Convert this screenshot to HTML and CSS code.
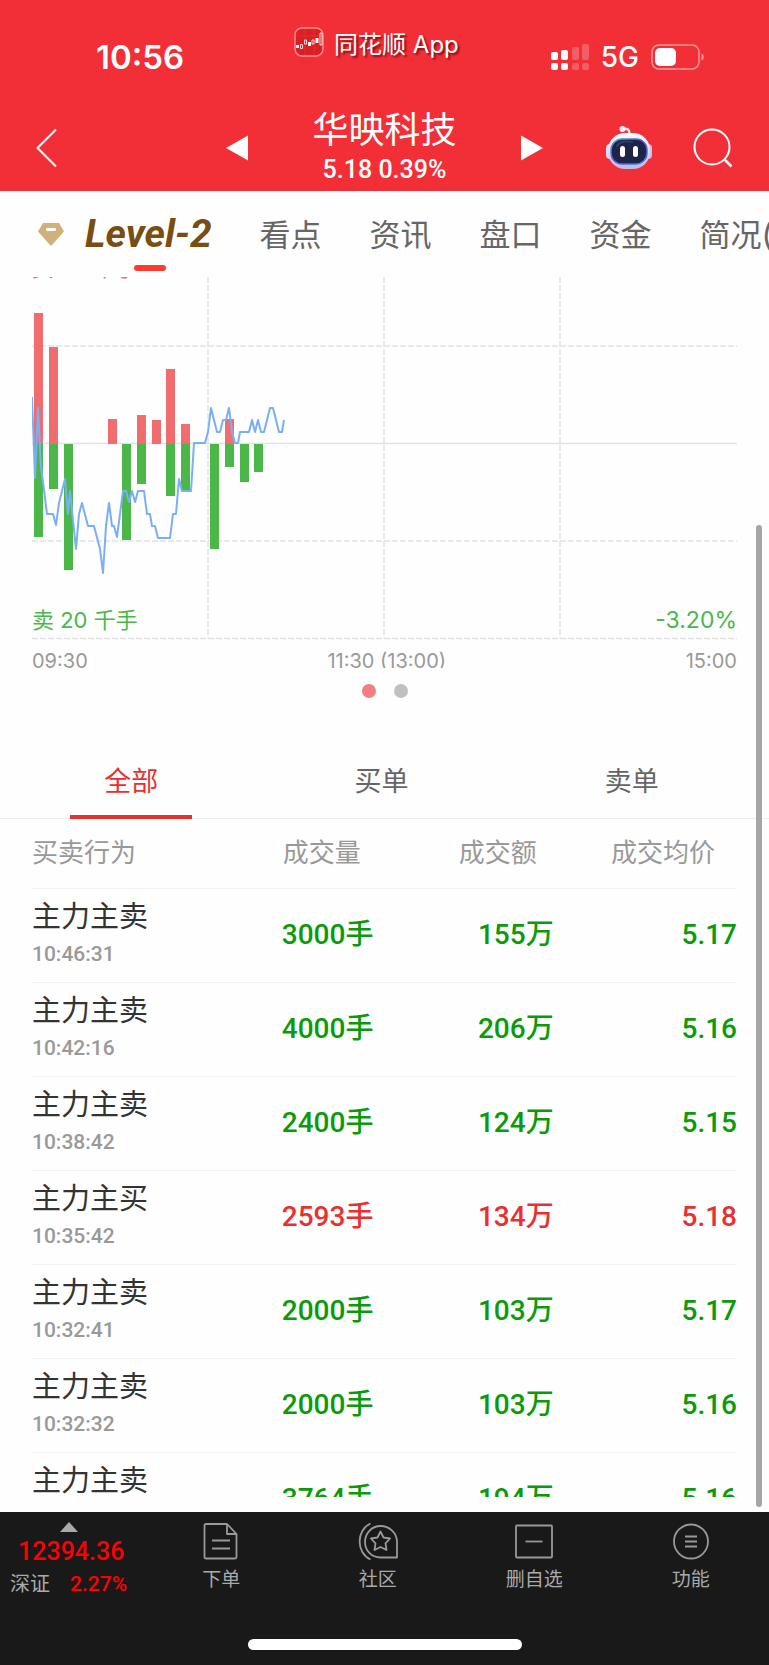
FILE: index.html
```html
<!DOCTYPE html>
<html lang="zh-CN">
<head>
    <meta charset="UTF-8">
    <meta name="viewport" content="width=device-width, initial-scale=1.0">
    <title>华映科技</title>
    <link rel="stylesheet" href="styles.css">
</head>
<body>
    <header class="header">
        <!-- 状态栏 -->
        <div class="status">
            <span class="status-time">10:56</span>
            <div class="brand">
                <svg class="brand-icon" width="30" height="30" viewBox="0 0 30 30" fill="none">
                    <rect x="1" y="1" width="28" height="28" rx="7" fill="#dc1f24" stroke="#f98d90" stroke-width="1.5"/>
                    <path d="M2 9h26M11 2v26M20 2v26" stroke="#e63a3e" stroke-width=".5"/>
                    <path d="M2 18h3v3H2zM14 15h3v4h-3zM21.500 11h3v5h-3z" fill="#fff"/>
                    <path d="M6.500 17.500h2v4h-2zM10.500 13h2v4h-2zM18 13h2v4h-2zM26 6h2v12h-2z" stroke="#fff" stroke-width=".8"/>
                </svg>
                <span class="brand-name">同花顺 App</span>
            </div>
            <div class="status-right">
                <svg width="38" height="28" viewBox="0 0 38 28" fill="#fff">
                    <rect x="0" y="9" width="7" height="8" rx="2"/>
                    <rect x="10" y="7" width="7" height="10" rx="2"/>
                    <rect x="0" y="20" width="7" height="7" rx="2"/>
                    <rect x="10" y="20" width="7" height="7" rx="2"/>
                    <g opacity=".22">
                        <rect x="21" y="4" width="7" height="13" rx="2"/>
                        <rect x="31" y="1" width="7" height="16" rx="2"/>
                        <rect x="21" y="20" width="7" height="7" rx="2"/>
                        <rect x="31" y="20" width="7" height="7" rx="2"/>
                    </g>
                </svg>
                <span class="network">5G</span>
                <svg width="54" height="26" viewBox="0 0 54 26">
                    <rect x="1" y="1" width="47" height="24" rx="7" fill="none" stroke="#fff" stroke-opacity=".5" stroke-width="1.5"/>
                    <rect x="4" y="4" width="21" height="18" rx="5" fill="#fff"/>
                    <path d="M50.500 9.500c3 1 3 6 0 7z" fill="#fff" fill-opacity=".5"/>
                </svg>
            </div>
        </div>
        <!-- 标题栏 -->
        <div class="nav">
            <button class="icon-btn" type="button" aria-label="返回">
                <svg width="21" height="40" viewBox="0 0 21 40" fill="none" stroke="#fff" stroke-width="2"><path d="M20 1.500 1.500 20 20 38.500"/></svg>
            </button>
            <div class="stock">
                <button class="icon-btn" type="button" aria-label="上一只">
                    <svg width="22" height="26" viewBox="0 0 22 26" fill="#fff"><path d="M22 .5v25L0 13z"/></svg>
                </button>
                <div class="stock-info">
                    <h1 class="stock-name">华映科技</h1>
                    <p class="stock-price">5.18 0.39%</p>
                </div>
                <button class="icon-btn" type="button" aria-label="下一只">
                    <svg width="22" height="26" viewBox="0 0 22 26" fill="#fff"><path d="M0 .5v25L22 13z"/></svg>
                </button>
            </div>
            <div class="nav-right">
                <button class="icon-btn" type="button" aria-label="助手">
                    <svg width="48" height="44" viewBox="0 0 48 44">
                        <defs>
                            <linearGradient id="head" x1="0" y1="0" x2="0" y2="1">
                                <stop offset="0" stop-color="#fff"/>
                                <stop offset="1" stop-color="#b9bbe8"/>
                            </linearGradient>
                            <linearGradient id="rim" x1="0" y1="0" x2="1" y2="1">
                                <stop offset="0" stop-color="#36b8d8"/>
                                <stop offset=".5" stop-color="#7a45d8"/>
                                <stop offset="1" stop-color="#3f7df0"/>
                            </linearGradient>
                        </defs>
                        <path d="M17 2.500c4 1 7-1 7.500 5" fill="none" stroke="#e4e4f6" stroke-width="2.500"/>
                        <circle cx="17.500" cy="3" r="3" fill="#eef"/>
                        <rect x="1" y="18" width="8" height="15" rx="4" fill="#dcdcf4"/>
                        <rect x="39" y="18" width="8" height="15" rx="4" fill="#c5c5ea"/>
                        <rect x="3" y="7" width="42" height="36" rx="17" fill="url(#head)"/>
                        <rect x="6" y="13" width="36" height="25" rx="11" fill="#1c2447" stroke="url(#rim)" stroke-width="1.500"/>
                        <path d="M12 20c3-5 10-5 15-4" fill="none" stroke="#333c62" stroke-width="2" stroke-linecap="round"/>
                        <rect x="15" y="20" width="5" height="11" rx="2.500" fill="#fff"/>
                        <rect x="28" y="20" width="5" height="11" rx="2.500" fill="#fff"/>
                    </svg>
                </button>
                <button class="icon-btn" type="button" aria-label="搜索">
                    <svg width="40" height="40" viewBox="0 0 40 40" fill="none" stroke="#fff" stroke-width="2"><circle cx="19" cy="19" r="17.500"/><path d="m32 32 6.500 6.500" stroke-width="2.500"/></svg>
                </button>
            </div>
        </div>
    </header>

    <nav class="tabs">
        <a class="tab tab-active" href="#level2">
            <svg class="gem" width="28" height="24" viewBox="0 0 28 24">
                <path d="M6 1h16l5 8.500L15 23q-1 1-2 0L1 9.500z" fill="#d2b07b"/>
                <rect x="9" y="6" width="10" height="3" rx="1" fill="#fff"/>
            </svg>
            <span class="level">Level-2</span>
        </a>
        <a class="tab" href="#kandian">看点</a>
        <a class="tab" href="#zixun">资讯</a>
        <a class="tab" href="#pankou">盘口</a>
        <a class="tab" href="#zijin">资金</a>
        <a class="tab" href="#jiankuang">简况(F10)</a>
    </nav>

    <main class="content">
        <!-- 买卖力道图 -->
        <section class="chart">
            <span class="chart-label chart-buy">买 20 千手</span>
            <svg class="chart-svg" viewBox="0 0 705 363">
                <g fill="none" stroke="#e2e2e2" stroke-width="1.500">
                    <path d="M0 69h705M0 264h705M0 361.500h705M176 0v361M352 0v361M528 0v361" stroke-dasharray="6 2"/>
                    <path d="M0 166.500h705"/>
                </g>
                <path d="M2 36h9v131H2zM17 70h9v97h-9zM76 142h9v25h-9zM105 138h9v29h-9zM120 143h9v24h-9zM134 92h9v75h-9zM149 147h9v20h-9zM193 142h9v25h-9z" fill="#f16c6e"/>
                <path d="M2 167h9v93H2zM17 167h9v45h-9zM32 167h9v126h-9zM90 167h9v96h-9zM105 167h9v40h-9zM134 167h9v52h-9zM149 167h9v47h-9zM178 167h9v105h-9zM193 167h9v23h-9zM208 167h9v38h-9zM222 167h9v28h-9z" fill="#4bb749"/>
                <polyline fill="none" stroke="#79b0f5" stroke-width="2" stroke-linejoin="round" points="0,120 3,201 6,131 9,190 12,213 15,237 21,237 24,248 27,226 33,202 36,237 38,214 41,243 44,272 47,237 50,226 56,249 62,249 68,272 71,296 74,249 77,226 80,249 82,249 85,260 91,214 94,214 97,225 100,214 103,225 106,214 112,214 115,237 118,237 120,249 123,249 126,261 138,261 141,237 144,237 147,202 150,214 159,214 162,166 173,166 176,155 179,131 185,155 188,155 191,143 194,143 197,131 200,155 203,166 206,166 208,155 217,155 220,143 223,155 226,143 229,155 232,155 238,131 241,131 247,155 250,155 252,143"/>
            </svg>
            <span class="chart-label chart-sell">卖 20 千手</span>
            <span class="chart-label chart-rate">-3.20%</span>
        </section>
        <div class="axis">
            <span>09:30</span>
            <span>11:30 (13:00)</span>
            <span>15:00</span>
        </div>
        <div class="pager">
            <span class="dot dot-active"></span>
            <span class="dot"></span>
        </div>

        <div class="filter">
            <button class="filter-btn filter-active" type="button">全部</button>
            <button class="filter-btn" type="button">买单</button>
            <button class="filter-btn" type="button">卖单</button>
        </div>

        <div class="list">
            <table class="deals">
                <thead>
                    <tr><th class="col-name">买卖行为</th><th class="col-volume">成交量</th><th class="col-amount">成交额</th><th class="col-price">成交均价</th></tr>
                </thead>
                <tbody>
                    <tr class="sell">
                        <td><p class="deal-name">主力主卖</p><p class="deal-time">10:46:31</p></td>
                        <td>3000手</td><td>155万</td><td>5.17</td>
                    </tr>
                    <tr class="sell">
                        <td><p class="deal-name">主力主卖</p><p class="deal-time">10:42:16</p></td>
                        <td>4000手</td><td>206万</td><td>5.16</td>
                    </tr>
                    <tr class="sell">
                        <td><p class="deal-name">主力主卖</p><p class="deal-time">10:38:42</p></td>
                        <td>2400手</td><td>124万</td><td>5.15</td>
                    </tr>
                    <tr class="buy">
                        <td><p class="deal-name">主力主买</p><p class="deal-time">10:35:42</p></td>
                        <td>2593手</td><td>134万</td><td>5.18</td>
                    </tr>
                    <tr class="sell">
                        <td><p class="deal-name">主力主卖</p><p class="deal-time">10:32:41</p></td>
                        <td>2000手</td><td>103万</td><td>5.17</td>
                    </tr>
                    <tr class="sell">
                        <td><p class="deal-name">主力主卖</p><p class="deal-time">10:32:32</p></td>
                        <td>2000手</td><td>103万</td><td>5.16</td>
                    </tr>
                    <tr class="sell">
                        <td><p class="deal-name">主力主卖</p></td>
                        <td>3764手</td><td>194万</td><td>5.16</td>
                    </tr>
                </tbody>
            </table>
        </div>
        <div class="scrollbar"></div>
    </main>

    <footer class="footer">
        <div class="toolbar">
            <a class="index" href="#index">
                <span class="index-arrow"></span>
                <span class="index-value">12394.36</span>
                <span class="index-row"><span class="index-name">深证</span><span class="index-rate">2.27%</span></span>
            </a>
            <button class="tool" type="button">
                <svg width="40" height="40" viewBox="0 0 40 40" fill="none" stroke="#999" stroke-width="1.800" stroke-linejoin="round">
                    <path d="M5 3h21l9.500 10v23q0 1.500-1.500 1.500H5q-1.500 0-1.500-1.500V4.500Q3.500 3 5 3zM26 3v10h9.500M11 19.500h18M11 27.500h18"/>
                </svg>
                <span>下单</span>
            </button>
            <button class="tool" type="button">
                <svg width="40" height="40" viewBox="0 0 40 40" fill="none" stroke="#999" stroke-width="1.800" stroke-linejoin="round">
                    <path d="M22.500 5C31.500 5 39 12 39 21v15.500H22.500C13.500 36.500 7 29.500 7 21S13.500 5 22.500 5z"/>
                    <path d="M12.500 2.500C-2 9-2 32 12.500 38.500"/>
                    <path d="m22.500 10.500 3 6 6.500 1-4.500 4.800 1 6.700-6-3-6 3 1-6.700-4.500-4.800 6.500-1z"/>
                </svg>
                <span>社区</span>
            </button>
            <button class="tool" type="button">
                <svg width="40" height="40" viewBox="0 0 40 40" fill="none" stroke="#999" stroke-width="1.800">
                    <rect x="2" y="4.500" width="36" height="32" rx="1"/><path d="M11.500 20.500h17"/>
                </svg>
                <span>删自选</span>
            </button>
            <button class="tool" type="button">
                <svg width="40" height="40" viewBox="0 0 40 40" fill="none" stroke="#999" stroke-width="1.800">
                    <circle cx="20" cy="20.500" r="17"/><path d="M14 15.500h12M14 20.500h12M14 25.500h12"/>
                </svg>
                <span>功能</span>
            </button>
        </div>
        <div class="home-bar"></div>
    </footer>
</body>
</html>
```
FILE: styles.css
```css
* {
    margin: 0;
    padding: 0;
    box-sizing: border-box;
}
body {
    display: flex;
    flex-direction: column;
    height: 100vh;
    overflow: hidden;
    background: #fefefe;
    color: #666;
    font-family: Inter, "Noto Sans CJK SC", sans-serif;
}
button {
    border: 0;
    background: none;
    font-family: inherit;
    color: inherit;
}
a {
    color: inherit;
    text-decoration: none;
}
svg {
    display: block;
}
/* 顶部 */
.header {
    flex: none;
    background: #f22f37;
    color: #fff;
}
.status {
    display: flex;
    align-items: center;
    height: 104px;
    padding: 10px 64px 0 96px;
}
.status-time {
    font-size: 33px;
    font-weight: 600;
}
.brand {
    display: flex;
    align-items: center;
    gap: 10px;
    margin: 0 0 30px 110px;
}
.brand-name {
    font-size: 24px;
    text-shadow: 2px 2px 2px rgba(90, 0, 0, .7);
}
.status-right {
    display: flex;
    align-items: center;
    gap: 12px;
    margin-left: auto;
}
.network {
    font-size: 28px;
    font-weight: 500;
}
.nav {
    display: grid;
    grid-template-columns: 1fr 318px 1fr;
    align-items: center;
    height: 87px;
    padding: 0 36px;
}
.icon-btn {
    justify-self: start;
}
.stock {
    display: flex;
    justify-content: space-between;
    align-items: center;
}
.stock-info {
    text-align: center;
}
.stock-name {
    font-size: 36px;
    font-weight: 400;
    line-height: 44px;
}
.stock-price {
    font-family: Roboto, sans-serif;
    font-size: 25px;
    font-weight: 500;
    line-height: 36px;
}
.nav-right {
    display: flex;
    justify-content: flex-end;
    align-items: center;
    gap: 40px;
}
/* 分类标签 */
.tabs {
    flex: none;
    display: flex;
    gap: 48px;
    height: 86px;
    padding-left: 37px;
    overflow: hidden;
    font-size: 31px;
    line-height: 88px;
    white-space: nowrap;
}
.tab {
    flex: none;
}
.tab-active {
    position: relative;
    display: flex;
    align-items: center;
    gap: 20px;
    color: #7a4d10;
}
.tab-active::after {
    content: '';
    position: absolute;
    left: 97px;
    bottom: 6px;
    width: 32px;
    height: 6px;
    border-radius: 3px;
    background: #ff3b30;
}
.level {
    font-family: Roboto, sans-serif;
    font-size: 39px;
    font-style: italic;
    font-weight: 700;
}
/* 图表 */
.content {
    position: relative;
    flex: 1;
    display: flex;
    flex-direction: column;
    min-height: 0;
    padding-bottom: 15px;
}
.chart {
    flex: none;
    position: relative;
    margin: 0 32px;
    overflow: hidden;
}
.chart-svg {
    width: 100%;
}
.chart-label {
    position: absolute;
    font-size: 22px;
    line-height: 30px;
    color: #4bb749;
}
.chart-buy {
    top: -24px;
    left: 0;
    color: #f16c6e;
}
.chart-sell {
    bottom: 5px;
    left: 0;
}
.chart-rate {
    bottom: 5px;
    right: 0;
    font-size: 23px;
}
.axis {
    flex: none;
    display: flex;
    justify-content: space-between;
    height: 28px;
    margin: 0 32px;
    padding-top: 5px;
    overflow: hidden;
    font-size: 20px;
    line-height: 32px;
    color: #999;
}
.pager {
    flex: none;
    display: flex;
    justify-content: center;
    gap: 18px;
    height: 75px;
    padding-top: 16px;
}
.dot {
    width: 14px;
    height: 14px;
    border-radius: 50%;
    background: #c0c0c0;
}
.dot-active {
    background: #f28082;
}
/* 买卖单切换 */
.filter {
    flex: none;
    display: flex;
    padding: 0 12px 0 6px;
    border-bottom: 1px solid #eee;
}
.filter-btn {
    flex: 1;
    position: relative;
    height: 75px;
    padding-bottom: 3px;
    font-size: 27px;
}
.filter-active {
    color: #e93030;
}
.filter-active::after {
    content: '';
    position: absolute;
    left: 50%;
    bottom: -1px;
    width: 122px;
    height: 4px;
    margin-left: -61px;
    background: #e93030;
}
/* 成交明细 */
.list {
    flex: 1;
    min-height: 0;
    margin: 0 32px;
    overflow: hidden;
}
.deals {
    width: 100%;
    table-layout: fixed;
    border-collapse: collapse;
}
.deals th {
    height: 69px;
    font-size: 26px;
    font-weight: 400;
    line-height: 36px;
    text-align: left;
    color: #999;
}
.deals .col-name {
    width: 35%;
}
.deals .col-volume {
    width: 18%;
    padding-left: 4px;
}
.deals .col-amount {
    width: 21%;
    padding-right: 17px;
    text-align: right;
}
.deals .col-price {
    padding-right: 22px;
    text-align: right;
}
.deals tr {
    border-bottom: 1px solid #f2f2f2;
}
.deals td {
    height: 94px;
    font-family: Roboto, "Noto Sans CJK SC", sans-serif;
    font-size: 28px;
    font-weight: 500;
    line-height: 36px;
    text-align: right;
}
.deals td:first-child {
    padding-top: 8px;
    text-align: left;
    vertical-align: top;
}
.deals td:nth-child(2) {
    padding-left: 3px;
    text-align: left;
}
.sell {
    color: #099b09;
}
.buy {
    color: #e93030;
}
.deal-name {
    font-size: 29px;
    font-weight: 400;
    line-height: 40px;
    color: #333;
}
.deal-time {
    font-size: 21px;
    line-height: 34px;
    color: #999;
}
.scrollbar {
    position: absolute;
    top: 248px;
    right: 7px;
    bottom: 5px;
    width: 6px;
    border-radius: 3px;
    background: #a6a6a6;
}
/* 底部工具栏 */
.footer {
    flex: none;
    padding-bottom: 15px;
    background: #191919;
    color: #aaa;
}
.toolbar {
    display: flex;
    height: 127px;
    padding-top: 9px;
}
.index {
    width: 143px;
    padding-left: 10px;
}
.index-arrow {
    display: block;
    width: 0;
    margin: 1px 0 0 50px;
    border: 9px solid transparent;
    border-top: 0;
    border-bottom: 10px solid #aaa;
}
.index-value {
    display: block;
    padding-left: 8px;
    font-family: Roboto, sans-serif;
    font-size: 25px;
    font-weight: 500;
    line-height: 40px;
    color: #f00;
}
.index-row {
    display: flex;
    align-items: center;
    gap: 20px;
    font-size: 20px;
    line-height: 24px;
}
.index-rate {
    font-family: Roboto, sans-serif;
    font-size: 21px;
    font-weight: 500;
    color: #f00;
}
.tool {
    flex: 1;
    display: flex;
    flex-direction: column;
    align-items: center;
    gap: 4px;
    font-size: 19px;
    line-height: 30px;
}
.home-bar {
    width: 274px;
    height: 11px;
    margin: 0 auto;
    border-radius: 6px;
    background: #fff;
}
```
